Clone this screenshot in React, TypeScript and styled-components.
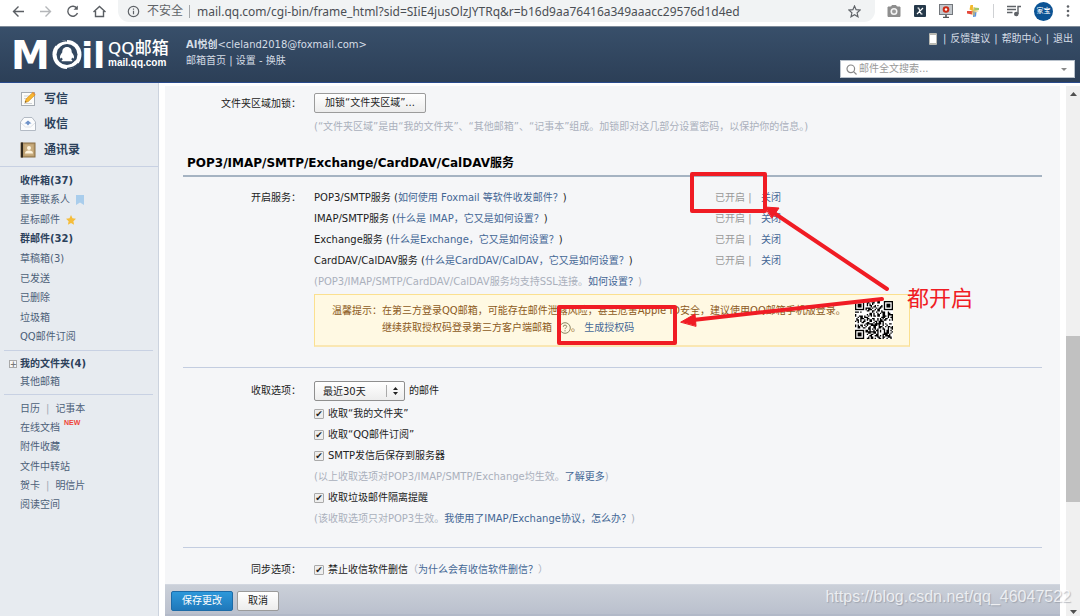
import React from "react";
import styled, { createGlobalStyle, css } from "styled-components";

const GlobalStyle = createGlobalStyle`
  * { box-sizing: border-box; }
  html, body { margin: 0; padding: 0; }
  body {
    font: 10px/20px "DejaVu Sans", "Noto Sans CJK SC", sans-serif;
    color: #222;
    background: #fff;
  }
  a { color: #446795; text-decoration: none; }
  button, input, select { font: inherit; }
`;

const Page = styled.div`
  position: relative;
  display: flex;
  flex-direction: column;
  height: 100vh;
  overflow: hidden;
`;

/* ---------- Browser toolbar ---------- */

const BrowserBar = styled.div`
  display: flex;
  align-items: center;
  flex: none;
  height: 26px;
  padding: 0 10px 4px;
  background: #fff;
  color: #5f6368;
`;

const NavButton = styled.button<{ $dim?: boolean }>`
  display: flex;
  width: 17px;
  height: 17px;
  padding: 0;
  margin-right: 10px;
  border: 0;
  background: none;
  color: ${(p) => (p.$dim ? "#b4b6b9" : "#5a5e63")};
`;

const AddressBar = styled.div`
  display: flex;
  align-items: center;
  flex: 1;
  height: 22px;
  margin: 0 12px 0 0;
  padding: 0 14px 0 9px;
  border-radius: 0 0 11px 11px;
  background: #f1f3f4;
  font-size: 12px;
`;

const Security = styled.span`
  margin-left: 7px;
  padding-right: 6px;
  border-right: 1px solid #a5a8ab;
  line-height: 13px;
  white-space: nowrap;
`;

const AddressInput = styled.input`
  flex: 1;
  min-width: 0;
  margin-left: 7px;
  padding: 0;
  border: 0;
  background: none;
  font: 12px "Noto Sans", sans-serif;
  color: #4b4f54;
`;

const Extensions = styled.div`
  display: flex;
  align-items: center;
  gap: 13px;
`;

const Avatar = styled.span`
  width: 19px;
  height: 19px;
  border-radius: 50%;
  background: #0b5394;
  color: #fff;
  font-size: 7px;
  line-height: 19px;
  text-align: center;
`;

const ToolDivider = styled.span`
  width: 1px;
  height: 14px;
  background: #cfd1d4;
`;

/* ---------- Mail header ---------- */

const Header = styled.header`
  display: flex;
  flex: none;
  height: 57px;
  padding: 0 5px 0 10px;
  border-top: 1px solid #7f8b99;
  border-bottom: 1px solid #294a8c;
  background: linear-gradient(#384f6a, #2c3f57);
  color: #d5dde6;
  a { color: inherit; }
`;

const Brand = styled.div`
  display: flex;
  gap: 4px;
  width: 176px;
  padding-top: 5px;
  color: #fff;
`;

const BrandName = styled.div`
  display: flex;
  flex-direction: column;
  padding-top: 5px;
  font: 500 17px/22px "Noto Sans", "Noto Sans CJK SC", sans-serif;
`;

const BrandDomain = styled.span`
  font: bold 10px/8px "Liberation Sans", sans-serif;
`;

const Account = styled.div`
  display: flex;
  flex-direction: column;
  flex: 1;
  padding-top: 10px;
  line-height: 16px;
  white-space: pre;
`;

const HeaderTools = styled.div`
  display: flex;
  flex-direction: column;
  align-items: flex-end;
`;

const HelpLinks = styled.nav`
  display: flex;
  align-items: center;
  gap: 4px;
  height: 24px;
  padding-right: 2px;
  svg { margin-right: 2px; }
`;

const SearchBox = styled.div`
  display: flex;
  align-items: center;
  gap: 2px;
  width: 235px;
  height: 18px;
  margin-top: 9px;
  padding: 0 7px 0 5px;
  border: 1px solid #b9c2cc;
  background: #fff;
  color: #888;
  input {
    flex: 1;
    min-width: 0;
    padding: 0;
    border: 0;
    outline: 0;
    background: none;
  }
  input::placeholder { color: #999; opacity: 1; }
`;

/* ---------- Body ---------- */

const Body = styled.div`
  display: flex;
  flex: 1;
  min-height: 0;
`;

const Sidebar = styled.aside`
  flex: none;
  width: 159px;
  border-right: 1px solid #ccd3de;
  background: #e7ebf0;
  a { color: #4c6078; }
`;

const Primary = styled.nav`
  display: grid;
  grid-auto-rows: 1fr;
  height: 84px;
  padding: 3px 0 3px 20px;
  border-bottom: 1px solid #c8d1e3;
  a {
    display: flex;
    align-items: center;
    gap: 8px;
    color: #2c415b;
    font-size: 12px;
    font-weight: bold;
  }
`;

const Folders = styled.nav<{ $height: number; $ruled?: boolean }>`
  display: grid;
  grid-auto-rows: 1fr;
  height: ${(p) => p.$height}px;
  margin: 0 5px 0 4px;
  padding: 4px 0 3px 16px;
  ${(p) => p.$ruled && css`border-bottom: 1px solid #c8d1e3;`}
`;

const FolderRow = styled.div<{ $bold?: boolean }>`
  display: flex;
  align-items: center;
  gap: 6px;
  line-height: 18px;
  color: #a2a9b3;
  ${(p) => p.$bold && css`font-weight: bold; a { color: #2c415b; }`}
`;

const Expander = styled.button`
  width: 8px;
  height: 8px;
  margin-left: -11px;
  margin-right: -3px;
  padding: 0;
  border: 1px solid #a9a9a9;
  background: #f8f8f8;
  color: #777;
  font-size: 8px;
  line-height: 5px;
`;

const NewTag = styled.sup`
  align-self: flex-start;
  margin-left: -2px;
  color: #f04438;
  font: bold 7px/10px "Liberation Sans", sans-serif;
`;

const Frame = styled.main`
  display: flex;
  flex-direction: column;
  flex: 1;
  min-width: 0;
  margin: 3px 6px 0;
  background: #f5f6f8;
`;

const Settings = styled.form`
  flex: 1;
  min-height: 0;
  overflow: hidden;
  padding: 7px 18px 0;
`;

const Section = styled.section<{ $top: number; $bottom: number; $plain?: boolean }>`
  display: grid;
  grid-template-columns: 118px minmax(0, 1fr);
  column-gap: 13px;
  padding: ${(p) => p.$top}px 0 ${(p) => p.$bottom}px;
  ${(p) => !p.$plain && css`border-bottom: 1px solid #c3cde0;`}
`;

const Stack = styled.div`
  display: flex;
  flex-direction: column;
  align-items: flex-start;
  gap: 3px;
`;

const Label = styled.div`
  line-height: 21px;
  text-align: right;
  white-space: nowrap;
`;

const Line = styled.div<{ $muted?: boolean }>`
  display: flex;
  align-items: center;
  height: 21px;
  white-space: pre;
  ${(p) => p.$muted && css`color: #aab0bc;`}
`;

const SelectLine = styled(Line)`
  margin-bottom: 2px;
`;

const Service = styled.div`
  width: 401px;
`;

const Status = styled.span`
  width: 46px;
  color: #999;
`;

const Title = styled.h2`
  margin: 0;
  padding: 0 4px;
  border-bottom: 2px solid #a5b3c2;
  color: #000;
  font-size: 12px;
  font-weight: bold;
  line-height: 23px;
`;

const Button = styled.button<{ $primary?: boolean }>`
  height: 20px;
  padding: 0 10px;
  border: 1px solid ${(p) => (p.$primary ? "#1c6ba8" : "#9b9b9b")};
  border-radius: 2px;
  background: ${(p) => (p.$primary ? "linear-gradient(#2d98da, #1f78ba)" : "linear-gradient(#fff, #ececec)")};
  color: ${(p) => (p.$primary ? "#fff" : "#222")};
  line-height: 18px;
  white-space: nowrap;
`;

const Notice = styled.div`
  display: flex;
  justify-content: space-between;
  align-items: flex-start;
  width: 596px;
  height: 53px;
  margin-top: 2px;
  padding: 6px 16px 0 17px;
  border: 1px solid #fbe08f;
  border-bottom: 2px solid #fae7b3;
  background: #fff9e3;
  color: #8c5a22;
`;

const NoticeText = styled.div`
  display: flex;
  padding-top: 1px;
  line-height: 17px;
  white-space: nowrap;
`;

const NoticeLine = styled.div`
  display: flex;
  align-items: center;
  height: 17px;
  white-space: pre;
  svg { flex: none; margin: 0 0 0 7px; }
`;

const SelectWrap = styled.span`
  display: inline-flex;
  align-items: center;
  justify-content: flex-end;
  position: relative;
  margin-right: 4px;
  select {
    appearance: none;
    width: 91px;
    height: 20px;
    padding: 0 8px;
    border: 1px solid #8f8f8f;
    border-radius: 2px;
    background: linear-gradient(#fff, #ededed);
    color: #222;
  }
  svg { position: absolute; right: 5px; pointer-events: none; }
`;

const CheckLabel = styled.label`
  display: flex;
  align-items: center;
  gap: 4px;
  color: #222;
`;

const CheckBox = styled.input`
  appearance: none;
  width: 10px;
  height: 10px;
  margin: 0;
  border: 1px solid #aaa;
  border-radius: 1px;
  background: #eee;
  display: grid;
  place-items: center;
  &:checked::before {
    content: "✔";
    color: #222;
    font: 9px/8px "DejaVu Sans", sans-serif;
  }
`;

const ActionBar = styled.div`
  display: flex;
  flex: none;
  gap: 4px;
  height: 32px;
  padding: 6px 6px 0;
  border-top: 1px solid #d2d7e0;
  border-bottom: 2px solid #b2b9c8;
  background: linear-gradient(#cbd0d9, #bac0cd);
`;

const ScrollTrack = styled.div`
  display: flex;
  flex-direction: column;
  align-items: center;
  flex: none;
  width: 14px;
  margin-top: 3px;
  padding: 6px 0 2px;
  background: #f0f0f0;
`;

const ScrollSpace = styled.div<{ $grow: number }>`
  flex: ${(p) => p.$grow} 1 0;
`;

const ScrollThumb = styled.div`
  flex: 165 1 0;
  align-self: stretch;
  background: #c1c1c1;
`;

/* ---------- Marks drawn over the page ---------- */

const Marks = styled.svg`
  position: absolute;
  left: 0;
  top: 0;
  pointer-events: none;
`;

const MarkText = styled.span`
  position: absolute;
  left: 907px;
  top: 282px;
  color: #f01c24;
  font: 22px/28px "Noto Sans CJK SC", sans-serif;
`;

const Watermark = styled.span`
  position: absolute;
  right: 9px;
  bottom: 9px;
  color: rgba(255, 255, 255, 0.75);
  font: 16px/20px "Liberation Sans", sans-serif;
  text-shadow: 1px 1px 1px rgba(120, 125, 135, 0.45);
`;

/* ---------- Drawings ---------- */

const stroke = { fill: "none", stroke: "currentColor", strokeWidth: 1.4 } as const;

const Wordmark = () => (
  <svg width="94" height="46" viewBox="0 0 94 46" fill="#fff" role="img" aria-label="Mail">
    <g fontFamily="DejaVu Sans" fontWeight="bold">
      <text x="1" y="37" fontSize="39">M</text>
      <text x="71" y="36" fontSize="36">i</text>
      <text x="83" y="36" fontSize="36">l</text>
    </g>
    <g transform="translate(3 0)">
      <circle cx="54" cy="22.500" r="14.500" />
      <circle cx="54" cy="22.500" r="10.500" fill="#334860" />
      <path d="M42.500 13.500Q46 9 54 8.800M65.500 31.500Q61 36.200 54 36.400" fill="none" stroke="#334860" strokeWidth="1.500" />
      <path d="M45 16Q47 12 53 10.500M63 29Q60 33.500 54 34.500" fill="none" stroke="#fff" strokeWidth="2" />
      <path d="M54 15c-3.200 0-4.900 2.300-4.700 5.300-1.900 2.200-2.800 4.300-2.100 6 .5.300 1.200-.2 1.600-.9l.9 2c-.9.500-1.300 1.100-.9 1.800h10.400c.4-.7 0-1.300-.9-1.800l.9-2c.4.700 1.100 1.200 1.600.9.700-1.700-.2-3.800-2.100-6 .2-3-1.500-5.300-4.700-5.300z" />
    </g>
  </svg>
);

const Compose = () => (
  <svg width="16" height="16" viewBox="0 0 16 16">
    <rect x="1.5" y="1.5" width="13" height="13" fill="#fcfcfa" stroke="#a5abb2" />
    <path d="M4 5h5M4 7.5h4M4 12.5h8" stroke="#d0d3d7" />
    <path d="M5 11.5l1-3.4 6.8-6.6 2.4 2.3-6.9 6.7z" fill="#f7b731" stroke="#cf8712" strokeWidth=".6" />
    <path d="M12.2 2l1-.9 2.2 2.1-1 1z" fill="#e58d3c" />
    <path d="M5 11.5l.4-1.5 1.1 1.1z" fill="#443" />
  </svg>
);

const Inbox = () => (
  <svg width="16" height="16" viewBox="0 0 16 16">
    <path d="M.5 6L4 1.5h8L15.5 6v8.5H.5z" fill="#fbfcfd" stroke="#b3bac4" />
    <path d="M1 7l4.500 4h5L15 7" fill="none" stroke="#dfe3e8" />
    <path d="M8 4.500l3.600 3H9.800L8 9.500 6.200 7.500H4.400z" fill="#6f93c9" />
  </svg>
);

const Contacts = () => (
  <svg width="16" height="16" viewBox="0 0 16 16">
    <rect x="1" y="1" width="14" height="14" fill="#b89b6c" stroke="#8b7146" />
    <path d="M1 .5h2v15H1z" fill="#30291f" />
    <rect x="4.500" y="2.500" width="9" height="11" fill="#c9ad7f" />
    <circle cx="9" cy="6" r="2" fill="#fff5df" />
    <path d="M5 11.500q0-2.500 3-3h2q3 .5 3 3z" fill="#fff5df" />
  </svg>
);

const Camera = () => (
  <svg width="14" height="12" viewBox="0 0 14 12">
    <path d="M1 2h3l1-1.500h4L10 2h3v9.500H1z" fill="#8e8e8e" stroke="#8e8e8e" strokeLinejoin="round" />
    <circle cx="7" cy="6.500" r="3.500" fill="#f4f4f4" />
    <circle cx="7" cy="6.500" r="2" fill="#9a9a9a" />
  </svg>
);

const XSquare = () => (
  <svg width="12" height="12" viewBox="0 0 12 12">
    <rect width="12" height="12" rx="1" fill="#26394a" />
    <path d="M3.500 3h1.200l2.400 6h1.400M9 3L3 9" fill="none" stroke="#fff" strokeWidth="1.200" />
  </svg>
);

const Monitor = () => (
  <svg width="14" height="14" viewBox="0 0 14 14">
    <rect x=".5" y=".5" width="13" height="10" fill="#c2c7cc" stroke="#73777c" />
    <path d="M4 13.500h6M7 11v2" stroke="#555" strokeWidth="1.600" />
    <circle cx="7" cy="5.500" r="3.300" fill="#cc2b16" />
    <circle cx="7" cy="5.500" r="1.200" fill="#fff" />
  </svg>
);

const Pinwheel = () => (
  <svg width="14" height="14" viewBox="0 0 14 14">
    <path d="M7 7V1H4.500L3.500 5.500z" fill="#f3b92c" />
    <path d="M7 7l6-1V4L8 3.500z" fill="#9fc76b" />
    <path d="M7 7v6l3-.5.5-4.500z" fill="#5794e8" />
    <path d="M7 7H1v2.500l5 1z" fill="#e5493b" />
    <path d="M6 3h3v3l4 1-4 2v3l-3-1-.5-3z" fill="#f2c14c" opacity=".5" />
  </svg>
);

const Playlist = () => (
  <svg width="14" height="12" viewBox="0 0 14 12" {...stroke}>
    <path d="M0 1.500h9M0 4.500h9M0 7.500h5.500M11 9V1.500h3" />
    <circle cx="9.300" cy="9" r="1.600" fill="currentColor" />
  </svg>
);

const QR_SIZE = 29;

const inFinder = (x: number, y: number) =>
  (x < 8 && y < 8) || (x > QR_SIZE - 9 && y < 8) || (x < 8 && y > QR_SIZE - 9);

const qrPath = () => {
  let seed = 20187;
  let d = "";
  for (let y = 0; y < QR_SIZE; y++) {
    for (let x = 0; x < QR_SIZE; x++) {
      seed = (seed * 1103515245 + 12345) % 2147483648;
      if (!inFinder(x, y) && (seed >> 12) % 2 === 0) d += `M${x} ${y}h1v1h-1z`;
    }
  }
  return d;
};

const QrCode = () => (
  <svg width="38" height="38" viewBox="0 0 29 29" role="img" aria-label="QR code">
    <rect width="29" height="29" fill="#fff" />
    <path d={qrPath()} />
    {[[0, 0], [22, 0], [0, 22]].map(([x, y]) => (
      <g key={`${x}-${y}`} transform={`translate(${x} ${y})`}>
        <rect x=".5" y=".5" width="6" height="6" fill="#fff" stroke="#000" />
        <rect x="2" y="2" width="3" height="3" />
      </g>
    ))}
  </svg>
);

/* ---------- Page data ---------- */

const services = [
  ["POP3/SMTP服务", "如何使用 Foxmail 等软件收发邮件？"],
  ["IMAP/SMTP服务", "什么是 IMAP，它又是如何设置？"],
  ["Exchange服务", "什么是Exchange，它又是如何设置？"],
  ["CardDAV/CalDAV服务", "什么是CardDAV/CalDAV，它又是如何设置？"],
];

const Check = ({ children }: { children: React.ReactNode }) => (
  <CheckLabel>
    <CheckBox type="checkbox" defaultChecked />
    {children}
  </CheckLabel>
);

const Link = ({ children }: { children: React.ReactNode }) => <a href="#">{children}</a>;

export default function App() {
  return (
    <Page>
      <GlobalStyle />
      <BrowserBar>
        <NavButton aria-label="Back">
          <svg width="17" height="17" viewBox="0 0 17 17" {...stroke}><path d="M14 8.500H3.500M8.500 3.500l-5 5 5 5" /></svg>
        </NavButton>
        <NavButton $dim aria-label="Forward">
          <svg width="17" height="17" viewBox="0 0 17 17" {...stroke}><path d="M3 8.500h10.500M8.500 3.500l5 5-5 5" /></svg>
        </NavButton>
        <NavButton aria-label="Reload">
          <svg width="17" height="17" viewBox="0 0 17 17" {...stroke}>
            <path d="M13 5.500A5 5 0 1 0 13.500 10" />
            <path d="M13.800 2.500v4.300H9.500z" fill="currentColor" stroke="none" />
          </svg>
        </NavButton>
        <NavButton aria-label="Home">
          <svg width="17" height="17" viewBox="0 0 17 17" {...stroke}><path d="M2.500 9l6-5.500 6 5.500M4.500 8v5.500h8V8" /></svg>
        </NavButton>
        <AddressBar>
          <svg width="13" height="13" viewBox="0 0 13 13" {...stroke} strokeWidth="1.200">
            <circle cx="6.500" cy="6.500" r="5.200" /><path d="M6.500 5.800v3.500M6.500 3.500v1.300" />
          </svg>
          <Security>不安全</Security>
          <AddressInput
            aria-label="Address"
            readOnly
            value="mail.qq.com/cgi-bin/frame_html?sid=SIiE4jusOlzJYTRq&r=b16d9aa76416a349aaacc29576d1d4ed"
          />
          <svg width="13" height="13" viewBox="0 0 13 13" {...stroke} strokeWidth="1.200">
            <path d="M6.500 1l1.600 3.700 4 .4-3 2.700.9 4-3.500-2.100L3 11.800l.9-4-3-2.700 4-.4z" />
          </svg>
        </AddressBar>
        <Extensions>
          <Camera />
          <XSquare />
          <Monitor />
          <Pinwheel />
          <ToolDivider />
          <Playlist />
          <Avatar>家宝</Avatar>
          <svg width="4" height="12" viewBox="0 0 4 12" fill="currentColor">
            <circle cx="2" cy="1.500" r="1.300" /><circle cx="2" cy="6" r="1.300" /><circle cx="2" cy="10.500" r="1.300" />
          </svg>
        </Extensions>
      </BrowserBar>

      <Header>
        <Brand>
          <Wordmark />
          <BrandName>
            QQ邮箱
            <BrandDomain>mail.qq.com</BrandDomain>
          </BrandName>
        </Brand>
        <Account>
          <div><b>AI悦创</b>&lt;cleland2018@foxmail.com&gt;</div>
          <div><Link>邮箱首页</Link> | <Link>设置</Link> - <Link>换肤</Link></div>
        </Account>
        <HeaderTools>
          <HelpLinks>
            <svg width="8" height="12" viewBox="0 0 8 12">
              <rect width="8" height="12" rx="1" fill="#b9b9b2" /><rect x="1" y="2" width="6" height="8" fill="#fff" />
            </svg>
            <span>|</span><Link>反馈建议</Link>
            <span>|</span><Link>帮助中心</Link>
            <span>|</span><Link>退出</Link>
          </HelpLinks>
          <SearchBox>
            <svg width="11" height="11" viewBox="0 0 11 11" {...stroke} strokeWidth="1.200">
              <circle cx="4.800" cy="4.800" r="3.800" /><path d="M7.600 7.600l2.900 2.900" />
            </svg>
            <input type="text" aria-label="邮件全文搜索" placeholder="邮件全文搜索..." />
            <svg width="6" height="3" viewBox="0 0 6 3"><path d="M0 0h6L3 3z" fill="#888" /></svg>
          </SearchBox>
        </HeaderTools>
      </Header>

      <Body>
        <Sidebar>
          <Primary>
            <a href="#"><Compose />写信</a>
            <a href="#"><Inbox />收信</a>
            <a href="#"><Contacts />通讯录</a>
          </Primary>
          <Folders $height={184} $ruled>
            <FolderRow $bold><Link>收件箱(37)</Link></FolderRow>
            <FolderRow>
              <Link>重要联系人</Link>
              <svg width="8" height="10" viewBox="0 0 8 10"><path d="M0 0h8v10L4 7.500 0 10z" fill="#a9cdec" /></svg>
            </FolderRow>
            <FolderRow>
              <Link>星标邮件</Link>
              <svg width="10" height="10" viewBox="0 0 10 10">
                <path d="M5 0l1.500 3.300 3.500.4-2.600 2.500.7 3.600L5 8 1.900 9.800l.7-3.600L0 3.700l3.500-.4z" fill="#f5bd3b" />
              </svg>
            </FolderRow>
            <FolderRow $bold><Link>群邮件(32)</Link></FolderRow>
            <FolderRow><Link>草稿箱(3)</Link></FolderRow>
            <FolderRow><Link>已发送</Link></FolderRow>
            <FolderRow><Link>已删除</Link></FolderRow>
            <FolderRow><Link>垃圾箱</Link></FolderRow>
            <FolderRow><Link>QQ邮件订阅</Link></FolderRow>
          </Folders>
          <Folders $height={44} $ruled>
            <FolderRow $bold><Expander type="button">+</Expander><Link>我的文件夹(4)</Link></FolderRow>
            <FolderRow><Link>其他邮箱</Link></FolderRow>
          </Folders>
          <Folders $height={123}>
            <FolderRow><Link>日历</Link> | <Link>记事本</Link></FolderRow>
            <FolderRow><Link>在线文档</Link><NewTag>NEW</NewTag></FolderRow>
            <FolderRow><Link>附件收藏</Link></FolderRow>
            <FolderRow><Link>文件中转站</Link></FolderRow>
            <FolderRow><Link>贺卡</Link> | <Link>明信片</Link></FolderRow>
            <FolderRow><Link>阅读空间</Link></FolderRow>
          </Folders>
        </Sidebar>

        <Frame>
          <Settings>
            <Section $plain $top={0} $bottom={15}>
              <Label>文件夹区域加锁：</Label>
              <Stack>
                <Button type="button">加锁“文件夹区域”...</Button>
                <Line $muted>(“文件夹区域”是由“我的文件夹”、“其他邮箱”、“记事本”组成。加锁即对这几部分设置密码，以保护你的信息。)</Line>
              </Stack>
            </Section>

            <Title>POP3/IMAP/SMTP/Exchange/CardDAV/CalDAV服务</Title>

            <Section $top={10} $bottom={20}>
              <Label>开启服务：</Label>
              <div>
                {services.map(([name, help]) => (
                  <Line key={name}>
                    <Service>{name} (<Link>{help}</Link>)</Service>
                    <Status>已开启 |</Status>
                    <Link>关闭</Link>
                  </Line>
                ))}
                <Line $muted>(POP3/IMAP/SMTP/CardDAV/CalDAV服务均支持SSL连接。<Link>如何设置？</Link>)</Line>
                <Notice>
                  <NoticeText>
                    <div>温馨提示：</div>
                    <div>
                      <NoticeLine>在第三方登录QQ邮箱，可能存在邮件泄露风险，甚至危害Apple ID安全，建议使用QQ邮箱手机版登录。</NoticeLine>
                      <NoticeLine>
                        继续获取授权码登录第三方客户端邮箱
                        <svg width="12" height="12" viewBox="0 0 12 12" fill="none" stroke="#8d8763" strokeWidth="1">
                          <circle cx="6" cy="6" r="5.300" />
                          <path d="M4.300 4.800q0-1.700 1.700-1.700t1.700 1.500q0 .8-1 1.400-.7.400-.7 1.100M6 8.200v1.200" />
                        </svg>
                        。 <Link>生成授权码</Link>
                      </NoticeLine>
                    </div>
                  </NoticeText>
                  <QrCode />
                </Notice>
              </div>
            </Section>

            <Section $top={12} $bottom={18}>
              <Label>收取选项：</Label>
              <div>
                <SelectLine>
                  <SelectWrap>
                    <select aria-label="收取选项"><option>最近30天</option></select>
                    <svg width="14" height="12" viewBox="0 0 14 12">
                      <path d="M.5 0v12" stroke="#aaa" /><path d="M7 5h5L9.500 2zM7 7h5L9.500 10z" fill="#222" />
                    </svg>
                  </SelectWrap>
                  的邮件
                </SelectLine>
                <Line><Check>收取“我的文件夹”</Check></Line>
                <Line><Check>收取“QQ邮件订阅”</Check></Line>
                <Line><Check>SMTP发信后保存到服务器</Check></Line>
                <Line $muted>(以上收取选项对POP3/IMAP/SMTP/Exchange均生效。<Link>了解更多</Link>)</Line>
                <Line><Check>收取垃圾邮件隔离提醒</Check></Line>
                <Line $muted>(该收取选项只对POP3生效。<Link>我使用了IMAP/Exchange协议，怎么办？</Link>)</Line>
              </div>
            </Section>

            <Section $plain $top={11} $bottom={0}>
              <Label>同步选项：</Label>
              <Line $muted>
                <Check>禁止收信软件删信</Check>
                （<Link>为什么会有收信软件删信？</Link>）
              </Line>
            </Section>
          </Settings>
          <ActionBar>
            <Button type="button" $primary>保存更改</Button>
            <Button type="button">取消</Button>
          </ActionBar>
        </Frame>

        <ScrollTrack>
          <svg width="7" height="4" viewBox="0 0 7 4"><path d="M0 4h7L3.500 0z" fill="#505050" /></svg>
          <ScrollSpace $grow={240} />
          <ScrollThumb />
          <ScrollSpace $grow={108} />
          <svg width="7" height="4" viewBox="0 0 7 4"><path d="M0 0h7L3.500 4z" fill="#505050" /></svg>
        </ScrollTrack>
      </Body>

      <Marks width="1000" height="400" viewBox="0 0 1000 400" fill="none" stroke="#f01c24" strokeWidth="4" strokeLinecap="round" strokeLinejoin="round">
        <rect x="692" y="174" width="73" height="37" />
        <rect x="559" y="307" width="116" height="36" />
        <path d="M887 289L774 213M882 299L693 320" />
        <path d="M765 207l14 1-7 10z" fill="#f01c24" strokeWidth="1" />
        <path d="M681 322l14-8 1 12z" fill="#f01c24" strokeWidth="1" />
      </Marks>
      <MarkText>都开启</MarkText>
      <Watermark>https://blog.csdn.net/qq_46047522</Watermark>
    </Page>
  );
}
